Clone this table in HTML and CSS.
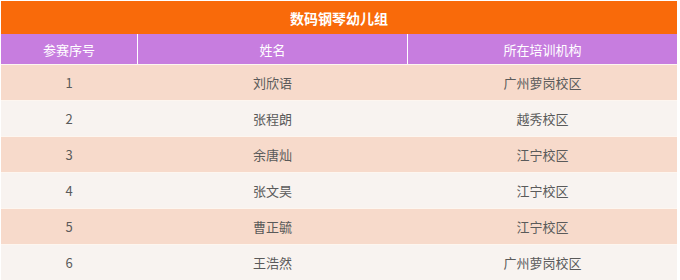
FILE: index.html
```html
<!DOCTYPE html>
<html lang="zh">
<head>
<meta charset="utf-8">
<link rel="stylesheet" href="styles.css">
</head>
<body>
<div class="table">
  <div class="title">数码钢琴幼儿组</div>
  <div class="row head">
    <div class="cell">参赛序号</div>
    <div class="cell">姓名</div>
    <div class="cell">所在培训机构</div>
  </div>
  <div class="row odd"><div class="cell">1</div><div class="cell">刘欣语</div><div class="cell">广州萝岗校区</div></div>
  <div class="row even"><div class="cell">2</div><div class="cell">张程朗</div><div class="cell">越秀校区</div></div>
  <div class="row odd"><div class="cell">3</div><div class="cell">余唐灿</div><div class="cell">江宁校区</div></div>
  <div class="row even"><div class="cell">4</div><div class="cell">张文昊</div><div class="cell">江宁校区</div></div>
  <div class="row odd"><div class="cell">5</div><div class="cell">曹正毓</div><div class="cell">江宁校区</div></div>
  <div class="row even"><div class="cell">6</div><div class="cell">王浩然</div><div class="cell">广州萝岗校区</div></div>
</div>
</body>
</html>
```
FILE: styles.css
```css
html, body {
  margin: 0;
  padding: 0;
  background: #ffffff;
}
body {
  font-family: "Noto Sans CJK SC", "Noto Sans", sans-serif;
  font-size: 13px;
  color: #5a5a5a;
}
.table {
  width: 676px;
  margin: 1px 0 0 1px;
}
.title {
  height: 33px;
  background: #f96a0a;
  color: #ffffff;
  font-weight: bold;
  font-size: 14px;
  display: flex;
  align-items: center;
  justify-content: center;
}
.row {
  display: grid;
  grid-template-columns: 136px 1fr 1fr;
  column-gap: 1px;
}
.cell {
  display: flex;
  align-items: center;
  justify-content: center;
}
.head {
  height: 30px;
  background: #ffffff;
}
.head .cell {
  background: #c77ddf;
  color: #ffffff;
}
.odd, .even {
  height: 35px;
  border-top: 1px solid #fdf6f0;
}
.odd { background: #f7dacb; }
.even { background: #f8f3f0; }
```
